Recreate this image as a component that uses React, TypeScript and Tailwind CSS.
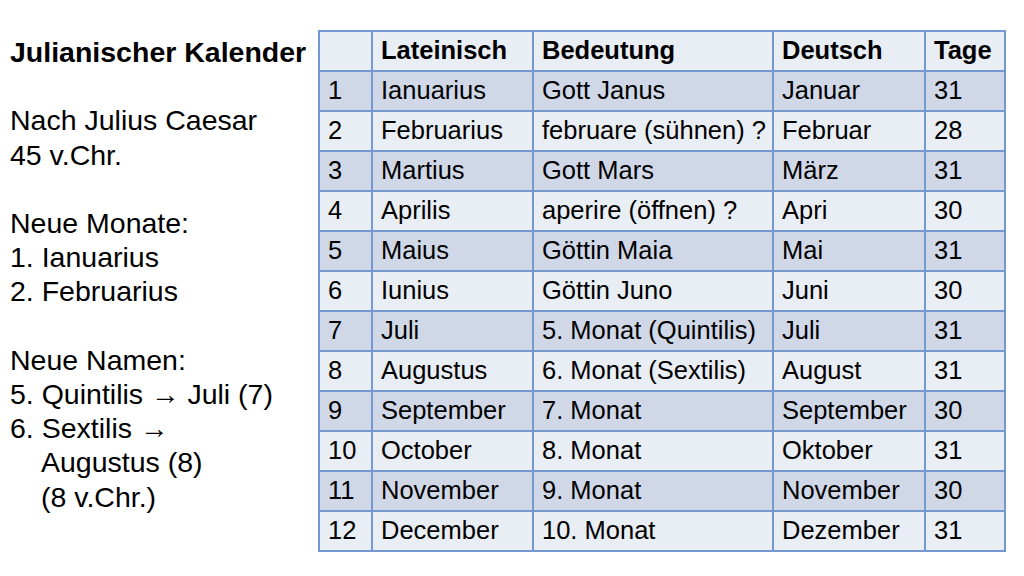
import React from "react";

const rows: [string, string, string, string, string][] = [
  ["1", "Ianuarius", "Gott Janus", "Januar", "31"],
  ["2", "Februarius", "februare (sühnen) ?", "Februar", "28"],
  ["3", "Martius", "Gott Mars", "März", "31"],
  ["4", "Aprilis", "aperire (öffnen) ?", "Apri", "30"],
  ["5", "Maius", "Göttin Maia", "Mai", "31"],
  ["6", "Iunius", "Göttin Juno", "Juni", "30"],
  ["7", "Juli", "5. Monat (Quintilis)", "Juli", "31"],
  ["8", "Augustus", "6. Monat (Sextilis)", "August", "31"],
  ["9", "September", "7. Monat", "September", "30"],
  ["10", "October", "8. Monat", "Oktober", "31"],
  ["11", "November", "9. Monat", "November", "30"],
  ["12", "December", "10. Monat", "Dezember", "31"],
];

const cell = "border-2 border-[#7499d0] h-[40px] px-[8px] py-0 text-left align-middle whitespace-nowrap overflow-hidden";

export default function App() {
  return (
    <div
      className="w-[1024px] h-[576px] bg-white text-black flex overflow-hidden"
      style={{ fontFamily: '"Liberation Sans", Arial, sans-serif' }}
    >
      <div className="w-[318px] shrink-0 pl-[10px] pt-[35px] text-[28.5px] leading-[34.2px]">
        <div className="font-bold">Julianischer Kalender</div>
        <div>&nbsp;</div>
        <div>Nach Julius Caesar</div>
        <div>45 v.Chr.</div>
        <div>&nbsp;</div>
        <div>Neue Monate:</div>
        <div>1. Ianuarius</div>
        <div>2. Februarius</div>
        <div>&nbsp;</div>
        <div>Neue Namen:</div>
        <div>5. Quintilis → Juli (7)</div>
        <div>6. Sextilis →</div>
        <div className="pl-[31px]">Augustus (8)</div>
        <div className="pl-[31px]">(8 v.Chr.)</div>
      </div>
      <div className="pt-[30px]">
        <table className="table-fixed border-collapse text-[25.5px] leading-none w-[686px]">
          <colgroup>
            <col className="w-[53px]" />
            <col className="w-[161px]" />
            <col className="w-[240px]" />
            <col className="w-[152px]" />
            <col className="w-[80px]" />
          </colgroup>
          <thead>
            <tr className="bg-[#e9edf4] font-bold">
              <th className={cell}></th>
              <th className={cell}>Lateinisch</th>
              <th className={cell}>Bedeutung</th>
              <th className={cell}>Deutsch</th>
              <th className={cell}>Tage</th>
            </tr>
          </thead>
          <tbody>
            {rows.map((r, i) => (
              <tr key={i} className={i % 2 === 0 ? "bg-[#d0d8e8]" : "bg-[#e9edf4]"}>
                {r.map((c, j) => (
                  <td key={j} className={cell}>
                    {c}
                  </td>
                ))}
              </tr>
            ))}
          </tbody>
        </table>
      </div>
    </div>
  );
}
